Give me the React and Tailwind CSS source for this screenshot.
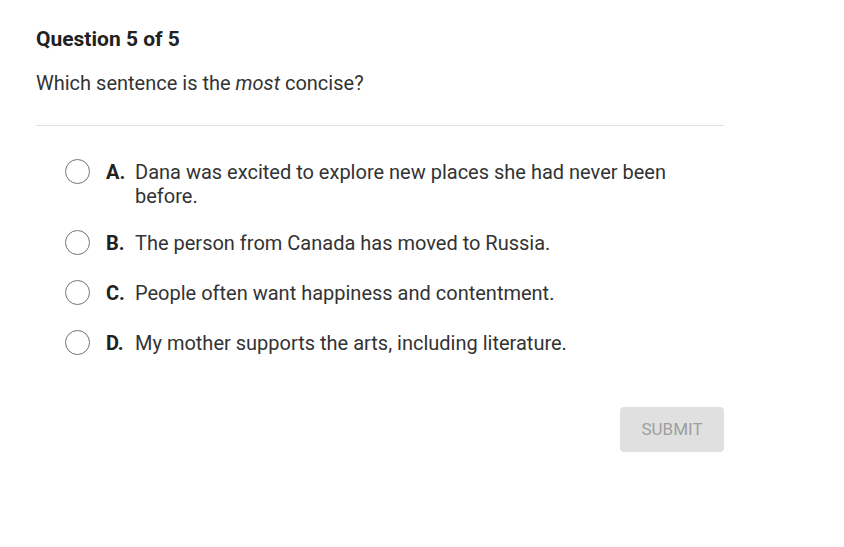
export default function App() {
  const options = [
    ["A.", "Dana was excited to explore new places she had never been before."],
    ["B.", "The person from Canada has moved to Russia."],
    ["C.", "People often want happiness and contentment."],
    ["D.", "My mother supports the arts, including literature."],
  ];
  return (
    <div className="w-[844px] h-[547px] bg-white text-[#212121]" style={{ fontFamily: "Roboto, 'Liberation Sans', sans-serif" }}>
      <div className="w-[688px] ml-[36px] pt-[27px]">
        <div className="text-[21px] leading-[24px] font-bold">Question 5 of 5</div>
        <div className="mt-[20px] text-[20px] leading-[24px] text-[#333]">
          Which sentence is the <i>most</i> concise?
        </div>
        <div className="mt-[30px] h-px bg-[#e0e0e0]"></div>
        <div className="mt-[34px] ml-[29px] flex flex-col gap-[23px]">
          {options.map(([l, t]) => (
            <div key={l} className="flex items-start min-h-[27px]">
              <div className="w-[25px] h-[25px] mt-[-1px] rounded-full border-[1.5px] border-[#757575] shrink-0"></div>
              <div className="ml-[16px] w-[29px] shrink-0 font-bold text-[20px] leading-[24px]">{l}</div>
              <div className="w-[540px] text-[20px] leading-[24px] text-[#333]">{t}</div>
            </div>
          ))}
        </div>
        <div className="flex justify-end mt-[49px]">
          <button className="w-[104px] h-[45px] rounded-[4px] bg-[#e0e0e0] text-[#9e9e9e] text-[17px]">SUBMIT</button>
        </div>
      </div>
    </div>
  );
}
